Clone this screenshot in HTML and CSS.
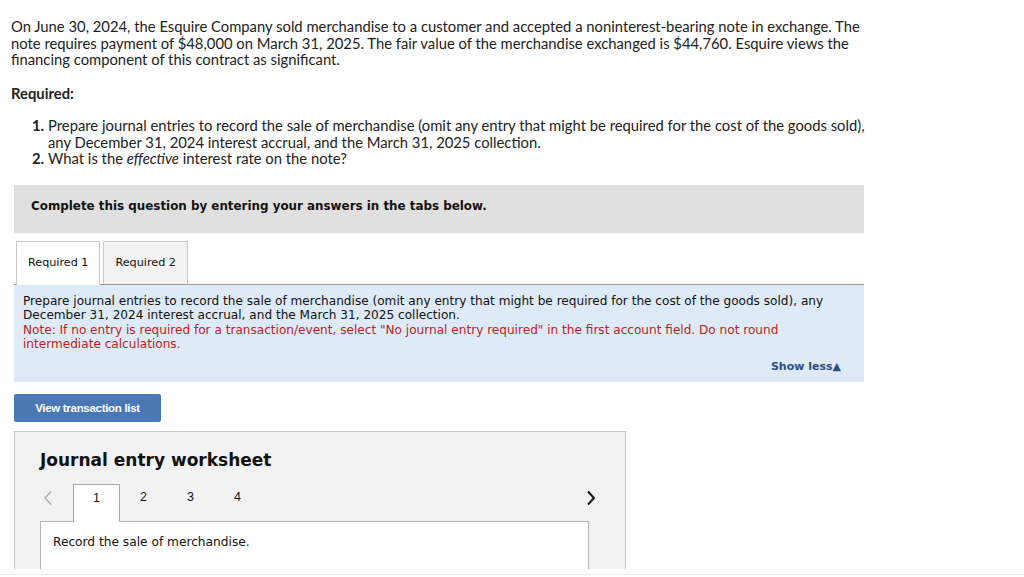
FILE: index.html
```html
<!DOCTYPE html>
<html>
    <head>
        <meta charset="utf-8">
        <title>Journal entry question</title>
        <link rel="stylesheet" href="styles.css">
    </head>
    <body>
        <div class="page">
            <div class="intro">
                <p>On June 30, 2024, the Esquire Company sold merchandise to a customer and accepted a noninterest-bearing note in exchange. The note requires payment of $48,000 on March 31, 2025. The fair value of the merchandise exchanged is $44,760. Esquire views the financing component of this contract as significant.</p>
                <h4 class="req-title">Required:</h4>
                <ol class="req-list">
                    <li><b>1.</b><span>Prepare journal entries to record the sale of merchandise (omit any entry that might be required for the cost of the goods sold), any December 31, 2024 interest accrual, and the March 31, 2025 collection.</span></li>
                    <li><b>2.</b><span>What is the <i>effective</i> interest rate on the note?</span></li>
                </ol>
            </div>

            <div class="work">
                <div class="banner">Complete this question by entering your answers in the tabs below.</div>

                <div class="tabs">
                    <div class="tab active">Required 1</div>
                    <div class="tab">Required 2</div>
                </div>

                <div class="prompt">
                    <p>Prepare journal entries to record the sale of merchandise (omit any entry that might be required for the cost of the goods sold), any December 31, 2024 interest accrual, and the March 31, 2025 collection.</p>
                    <p class="note">Note: If no entry is required for a transaction/event, select "No journal entry required" in the first account field. Do not round intermediate calculations.</p>
                    <div class="show-less">Show less&#9650;</div>
                </div>

                <button class="btn">View transaction list</button>

                <div class="sheet">
                    <h3>Journal entry worksheet</h3>
                    <div class="pager">
                        <span class="arrow prev">
                            <svg width="10" height="16" viewBox="0 0 10 16"><path d="M8 1.5 L2 8 L8 14.5" fill="none" stroke="#aaa" stroke-width="1.4"/></svg>
                        </span>
                        <span class="page-num current">1</span>
                        <span class="page-num">2</span>
                        <span class="page-num">3</span>
                        <span class="page-num">4</span>
                        <span class="arrow next">
                            <svg width="10" height="16" viewBox="0 0 10 16"><path d="M2 1.5 L8 8 L2 14.5" fill="none" stroke="#111" stroke-width="2"/></svg>
                        </span>
                    </div>
                    <div class="entry">
                        <p>Record the sale of merchandise.</p>
                    </div>
                </div>
            </div>
        </div>
        <div class="bottom-line"></div>
    </body>
</html>
```

FILE: styles.css
```css
body {
    margin: 0;
    background: #fff;
    color: #222;
}

.page {
    height: 569px;
    overflow: hidden;
}

.bottom-line {
    margin-top: 5px;
    height: 1px;
    background: #ececec;
}

/* question text */
.intro {
    font-family: Lato, "Liberation Sans", sans-serif;
    font-size: 14.8px;
    line-height: 16.5px;
    color: #222;
    padding: 18px 0 0 11px;
    width: 870px;
}
.intro p {
    margin: 0;
}
.req-title {
    margin: 17px 0 0 0;
    font-size: 14.8px;
    font-weight: bold;
}
.req-list {
    list-style: none;
    margin: 16px 0 0 0;
    padding: 0 0 0 21px;
}
.req-list li {
    display: flex;
}
.req-list li b {
    width: 16px;
    flex-shrink: 0;
}

/* answer area */
.work {
    margin: 18px 0 0 14px;
    width: 850px;
    font-family: "DejaVu Sans", Verdana, sans-serif;
}

.banner {
    background: #e0e0e0;
    height: 48px;
    line-height: 42px;
    padding-left: 17px;
    font-size: 11.9px;
    font-weight: bold;
    color: #111;
}

.tabs {
    display: flex;
    gap: 3px;
    margin-top: 8px;
    padding-left: 2px;
    border-bottom: 1px solid #9a9a9a;
}
.tab {
    height: 42px;
    line-height: 42px;
    padding: 0 11px;
    font-size: 11.2px;
    color: #111;
    background: #f2f2f2;
    border: 1px solid #c8c8c8;
    border-bottom: none;
}
.tab.active {
    background: #fff;
    margin-bottom: -1px;
    height: 43px;
}

.prompt {
    background: #deeaf7;
    padding: 9px 9px 8px 9px;
    font-size: 12.1px;
    line-height: 14.5px;
    color: #111;
}
.prompt p {
    margin: 0;
}
.prompt .note {
    color: #b3261e;
}
.show-less {
    text-align: right;
    margin-top: 8px;
    padding-right: 14px;
    font-size: 11px;
    font-weight: bold;
    color: #2c4f80;
}

.btn {
    display: block;
    margin-top: 12px;
    width: 147px;
    height: 28px;
    border: none;
    border-radius: 2px;
    background: #4a78b4;
    color: #fff;
    font-family: "Liberation Sans", Arial, sans-serif;
    font-size: 11.5px;
    font-weight: bold;
    letter-spacing: -0.3px;
    padding: 0;
}

.sheet {
    margin-top: 9px;
    width: 612px;
    height: 200px;
    background: #f2f2f2;
    border: 1px solid #c8c8c8;
    padding: 0 0 0 25px;
    box-sizing: border-box;
}
.sheet h3 {
    margin: 18px 0 0 0;
    font-size: 17px;
    font-weight: bold;
    color: #111;
}

.pager {
    display: flex;
    align-items: flex-end;
    margin-top: 14px;
    width: 556px;
    height: 37px;
    font-family: "Liberation Sans", Arial, sans-serif;
    font-size: 12.5px;
    color: #111;
}
.arrow {
    height: 37px;
    display: flex;
    align-items: flex-start;
    padding-top: 6px;
    box-sizing: border-box;
}
.arrow.prev {
    padding-left: 3px;
    width: 33px;
}
.arrow.next {
    margin-left: auto;
}
.page-num {
    width: 47px;
    height: 37px;
    line-height: 27px;
    text-align: center;
    box-sizing: border-box;
}
.page-num.current {
    background: #fff;
    border: 1px solid #aaa;
    border-bottom: none;
    height: 38px;
    margin-bottom: -1px;
    position: relative;
}

.entry {
    width: 549px;
    height: 80px;
    background: #fff;
    border: 1px solid #b4b4b4;
    box-sizing: border-box;
    padding: 13px 12px;
    font-size: 12.2px;
    color: #111;
}
.entry p {
    margin: 0;
}
```
